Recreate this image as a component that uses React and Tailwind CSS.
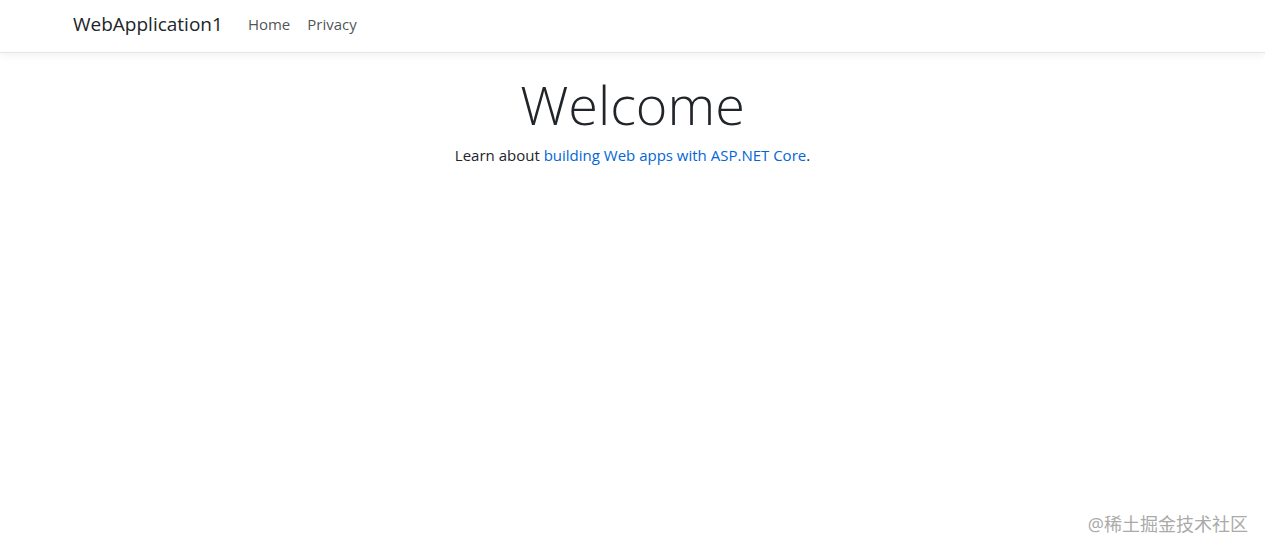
export default function App() {
  return (
    <div
      className="relative min-h-[553px] bg-white text-[#212529]"
      style={{ fontFamily: '"Open Sans", "Noto Sans", "Noto Sans CJK SC", sans-serif' }}
    >
      <nav className="h-[53px] border-b border-[#e5e5e5] bg-white shadow-[0_3px_8px_rgba(0,0,0,0.05)]">
        <div className="flex h-full items-center px-[73px] pb-[4px]">
          <a className="mr-[25px] text-[19px] text-[#212529]">WebApplication1</a>
          <a className="mr-[17px] text-[15px] text-[#212529]/80">Home</a>
          <a className="text-[15px] text-[#212529]/80">Privacy</a>
        </div>
      </nav>

      <main className="flex flex-col items-center pt-[19px]">
        <h1 className="text-[54px] font-light leading-[1.2] text-[#212529]">Welcome</h1>
        <p className="mt-[7px] text-[15px]">
          Learn about <a className="text-[#0366d6]">building Web apps with ASP.NET Core</a>.
        </p>
      </main>

      <div className="absolute bottom-[15px] right-[17px] text-[18px] text-[#aaaaaa]">
        @稀土掘金技术社区
      </div>
    </div>
  );
}
